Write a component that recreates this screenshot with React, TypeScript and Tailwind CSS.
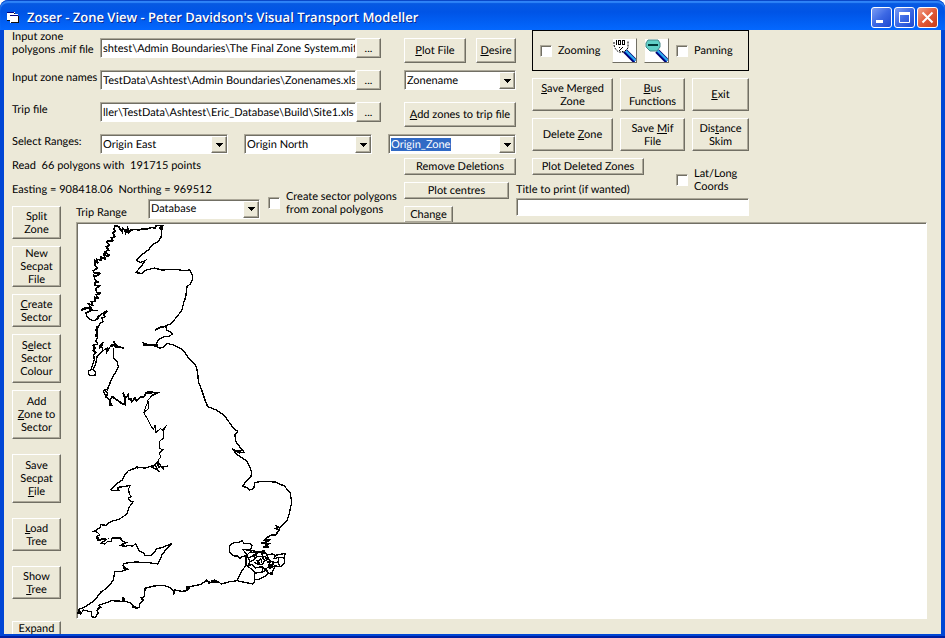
import React from "react";

const face = "border border-t-white border-l-white border-r-[#716f64] border-b-[#716f64] bg-[#ece9d8] shadow-[inset_-1px_-1px_0_#aca899]";
const sunken = "border border-t-[#aca899] border-l-[#aca899] border-r-white border-b-white bg-white shadow-[inset_1px_1px_0_#716f64]";

interface ButtonProps {
  text: string;
  className?: string;
}

// "&" marks the access key, "|" a line break
const Button = ({ text, className = "" }: ButtonProps) => (
  <button className={`${face} shrink-0 text-center ${className}`}>
    {text.split("|").map((line) => {
      const [before, rest] = line.includes("&") ? line.split("&") : [line, ""];
      return (
        <span key={line} className="block whitespace-nowrap">
          {before}
          {rest && <u className="underline-offset-1">{rest[0]}</u>}
          {rest.slice(1)}
        </span>
      );
    })}
  </button>
);

interface ComboProps {
  id: string;
  value: string;
  className?: string;
  selected?: boolean;
}

const Combo = ({ id, value, className = "", selected }: ComboProps) => (
  <div className={`${sunken} relative flex h-5 shrink-0 items-center pl-0.5 ${className}`}>
    <select
      id={id}
      aria-label={value}
      className={selected ? "appearance-none bg-[#316ac5] text-white outline-none" : "w-full appearance-none outline-none"}
    >
      <option>{value}</option>
    </select>
    <span className={`${face} pointer-events-none absolute top-px right-0 bottom-0 flex w-4 items-center justify-center`}>
      <svg width="7" height="4" shapeRendering="crispEdges">
        <path d="M0 0h7v1H0zM1 1h5v1H1zM2 2h3v1H2zM3 3h1v1H3z" />
      </svg>
    </span>
  </div>
);

const Check = ({ text, className = "" }: ButtonProps) => (
  <label className={`flex items-center gap-1.5 whitespace-pre ${className}`}>
    <input type="checkbox" className={`${sunken} size-3 shrink-0 appearance-none`} />
    {text}
  </label>
);

const files = [
  { id: "mif", label: "Input zone\npolygons .mif file", value: "shtest\\Admin Boundaries\\The Final Zone System.mif", shift: "-mt-2" },
  { id: "names", label: "Input zone names", value: "TestData\\Ashtest\\Admin Boundaries\\Zonenames.xls", shift: "mt-px" },
  { id: "trip", label: "Trip file", value: "ller\\TestData\\Ashtest\\Eric_Database\\Build\\Site1.xls", shift: "mt-px" },
];

const tools = [
  { text: "Split|Zone", size: "h-[33px] mb-[7px]" },
  { text: "New|Secpat|File", size: "h-[41px] mb-[7px]" },
  { text: "&Create|Sector", size: "h-[33px] mb-[7px]" },
  { text: "S&elect|Sector|Colour", size: "h-[49px] mb-[7px]" },
  { text: "Add|&Zone to|Sector", size: "h-[49px] mb-[15px]" },
  { text: "Save|Secpat|&File", size: "h-[49px] mb-[15px]" },
  { text: "&Load|Tree", size: "h-[33px] mb-[15px]" },
  { text: "Show|&Tree", size: "h-[33px] mb-[22px]" },
  { text: "Expand", size: "h-[33px] pb-5" },
];

const WindowButton = ({ name, red, children }: { name: string; red?: boolean; children: React.ReactNode }) => (
  <button
    aria-label={name}
    className={`flex size-[21px] items-center justify-center rounded-[3px] border border-white bg-linear-to-br ${
      red ? "from-[#f0a088] via-[#e25a38] to-[#c83c14]" : "from-[#7c9cf4] via-[#3c68e4] to-[#1c48d0]"
    }`}
  >
    <svg width="19" height="19" viewBox="0 0 19 19" fill="none" stroke="white">{children}</svg>
  </button>
);

const TitleBar = () => (
  <header className="flex h-[30px] shrink-0 items-center rounded-t-lg bg-linear-to-b from-[#0a5be0] from-0% via-[#0054e6] via-40% to-[#0468ff] px-[7px] pt-1 shadow-[inset_0_1px_0_#0a48c8,inset_0_3px_1px_#2f84f8]">
    <svg width="12" height="12" viewBox="0 0 12 12" shapeRendering="crispEdges">
      <path d="M0 1h8v2h3v9H3V9H0z" fill="#fff" />
      <path d="M0 1h7v1H0zM3 4h8v1H3z" fill="#000080" />
      <path d="M0 9h3v1H0zM4 11h8v1H4zM11 5h1v7h-1zM7 2h1v1H7z" fill="#111" />
    </svg>
    <h1 className="flex-1 pl-2 font-['Open_Sans',sans-serif] text-[13px] font-semibold text-white [text-shadow:1px_1px_0_#0a2a90]">
      Zoser - Zone View - Peter Davidson's Visual Transport Modeller
    </h1>
    <div className="flex gap-0.5">
      <WindowButton name="Minimize"><path d="M4 13.500h7" strokeWidth="3" /></WindowButton>
      <WindowButton name="Maximize"><path d="M4.500 4.500h10v10h-10z" /><path d="M4 5.500h11" strokeWidth="3" /></WindowButton>
      <WindowButton name="Close" red><path d="M4.500 4.500l10 10M14.500 4.500l-10 10" strokeWidth="2" /></WindowButton>
    </div>
  </header>
);

const Lens = ({ full }: { full?: boolean }) => (
  <button aria-label={full ? "Zoom to 100%" : "Zoom out"} className="size-[25px] border border-t-[#ece9d8] border-l-[#ece9d8] border-r-[#716f64] border-b-[#716f64] bg-white">
    <svg width="23" height="23" viewBox="0 0 23 23">
      <path d="M12 12l10 10" stroke="#000070" strokeWidth="5" />
      <path d="M12.500 11.500l10 10" stroke="#30b0f0" strokeWidth="2" />
      <path d="M12 13l10 10" stroke="#0030c0" />
      {full ? (
        <>
          <path d="M1 3v3q1 5 5 7h5l4-4V2" fill="none" stroke="#000" strokeDasharray="2 1" />
          <path d="M3.500 1v5M5.500 1.500h2v4h-2zM9.500 1.500h2v4h-2zM6 8h1M10 8l-4 4M9 12h1" fill="none" stroke="#000" shapeRendering="crispEdges" />
        </>
      ) : (
        <>
          <path d="M3 1h10l2 3v4l-3 4H5L1 8V4z" fill="#60d0c8" stroke="#488" />
          <path d="M3 6h10" stroke="#003838" strokeWidth="2" shapeRendering="crispEdges" />
        </>
      )}
    </svg>
  </button>
);

// one unit is a third of a pixel
const Coast = () => (
  <svg width="220" height="395" viewBox="6 9 660 1185" fill="none" stroke="#000" strokeWidth="4" shapeRendering="crispEdges">
    {/* highlands, west side */}
    <path
      transform="translate(3 6)"
      strokeWidth="5"
      d="M118 10L114 22 118 28 110 32 116 44 106 48 112 56 92 58 100 70 90 74 98 84 86 90 100 100 96 104 84 96 88 112 74 104 76 114 62 112 66 124 56 114 56 130 64 138 52 146 54 152 72 154 62 162 54 160 56 172 68 182 58 180 56 190 72 190 60 200 62 212 76 214 60 218 66 228 56 226 58 238 46 240 50 250 38 246 46 260 28 258 18 262 18 268"
    />
    <path strokeWidth="5" d="M121 16L132 20 136 28 142 36 142 24 150 30 152 38 158 24 160 38 168 30 180 28 192 30 204 26 214 28 230 22 240 24 244 16 262 17 254 24 262 30" />
    <path d="M262 17L258 52 248 66 232 74 222 88 196 108 184 122 196 128 210 122 200 138 182 158 200 160 214 150 238 144 260 150 300 148 330 152 344 150 352 164 352 180 346 192 336 200 332 232 326 248 320 272 304 292 290 310 276 316 272 318 276 332 284 334 292 342 282 350 266 350 250 360 244 372 234 376 254 384 266 382 276 370 292 374 314 384 328 394 340 414 362 436 368 456 370 484 380 510 390 540" />
    <path strokeWidth="5" d="M240 330L256 322 276 318M202 366L210 372 234 376 250 374M204 374L234 376" />
    <path d="M20 270L42 264 46 274 32 278 36 290 48 300 60 302 72 294 68 290 96 272 86 284 90 290 80 294 84 304 74 312 70 320 62 330 66 340 68 352 62 362 68 372 54 376 62 384 54 392 62 398 56 404 58 420 52 436 48 448 40 454 40 464 48 466 60 466 62 456 54 450 62 432 66 410 74 400 84 392 80 378 84 366 74 386 76 372M42 270L68 272M60 302L74 286M84 392L96 384 96 396 108 376 112 382 110 374 120 372 116 364 126 378 146 384 122 382 114 372" />
    <path strokeWidth="6" d="M96 272L86 284M66 318L64 352M56 376L60 402M118 368L122 382 132 380" />
    <path d="M116 384L116 414 126 424 130 440 122 456 112 474 100 500 98 510 88 508 86 516 94 532 100 538" />
    <path strokeWidth="5" d="M90 510L98 520 94 532 102 538 106 546 104 556 110 556 104 542 112 530 126 540 140 550 150 554 150 538 144 518 152 534 160 524 160 538 168 536 170 546 180 534 184 542 196 532 208 530 214 518 226 520 222 516 248 518 228 528" />
    <path strokeWidth="3" d="M228 530L218 542 222 552 220 566 206 578 214 590 220 602" />

    <g transform="translate(0 540)">
      <path strokeWidth="3" d="M220 6L214 16 206 38 218 58 230 82 236 88 240 76 242 98 256 86 262 90 274 76 266 90 266 114 252 126 252 146 266 148 254 158 256 172 248 184" />
      <path d="M248 184L240 194 250 212 232 202 250 186 256 196 266 208 264 200 280 198M240 196L230 198 210 204 188 202 160 212 148 226 142 240 124 252 108 268 112 272 132 270 128 262 144 260 166 256 160 268 164 284 170 290 160 294 166 304 174 306 162 322 156 342 132 358 108 364 92 376 78 374 74 384 56 394 66 396 74 404 64 410 68 420 94 418 78 430 90 432 98 424 108 424 112 414 136 414 144 424 154 428 138 436 150 440 158 436 172 438 182 432 192 452 206 460 210 466 230 466 246 446 264 442 290 430 262 462 256 476 248 492 222 488 180 486 148 490 144 498 158 508 140 514 120 514 114 542 98 562 76 578 58 602 28 622 12 628 8 640 16 642 26 630 50 636 50 650 60 652 70 640 66 630 78 622 72 616 100 606 108 602 144 604 146 590 148 604 166 608 178 620 184 626 192 622 196 608 206 600 198 594 208 590 208 576 214 564 236 558 264 556 284 562 296 572 296 584 300 570 320 574 336 572 344 562 332 562 376 554 396 540 402 550 412 546 418 540 430 546 440 552 460 546 486 542" />
      <path strokeWidth="6" d="M184 200L190 206M248 186L252 204M66 408L70 420 92 416M128 412L138 416M140 432L148 440M144 504L154 508M76 576L82 574M66 626L76 624M144 592L146 606M172 620L190 624M200 594L206 604M208 568L214 564M296 570L296 580M334 560L338 574M392 540L404 548M408 544L432 546M10 632L18 640" />
      <path d="M390 0L398 20 424 30 448 46 462 66 476 86 488 94 480 104 482 124 494 140 508 158 494 156 474 148 482 160 498 172 514 182 524 200 530 216 528 230 512 246 502 260 516 262 522 270 536 266 540 248 560 244 600 246 628 258 646 280 650 308 642 344 636 362 620 378 612 386" />
      <path strokeWidth="3" d="M486 150L506 152M474 150L496 160" />
    </g>

    {/* Thames estuary and the Kent zones */}
    <g transform="translate(441 936)">
      <path strokeWidth="5" d="M160 -20L170 -14 162 -10 172 -6 166 2 160 10 150 8 136 16 128 24 146 22 132 30 118 34 140 36 124 46 142 44" />
      <path d="M24 38L38 32 48 32 60 26 66 34 84 34 90 40 88 50 80 54 62 52 72 64 76 70 60 74 54 80 46 72 36 72 22 60 24 38M62 52L90 56 84 62 96 60M72 72L72 100 56 122 45 146 92 156 98 148 98 124 120 120 134 114 138 124 130 132 112 142 98 142" />
      <path d="M90 56L110 60 126 56 134 68 150 66 160 70 190 64 186 78 188 92 176 104 160 102 152 116 152 128 142 124 130 114M76 70L84 90 78 100 90 98 100 108 120 104 130 112 140 104 150 96M84 90L98 82 96 70 80 78M96 82L104 74 120 74 128 86 122 98 108 98 98 90M108 90L116 80 120 92M128 86L140 82 136 70 124 76 118 64M140 82L150 90 168 92 170 76 186 78M168 92L174 102M72 100L90 112 100 124M120 104L122 120M160 70L156 80 170 76M150 90L158 102M104 74L100 62" />
      <path strokeWidth="7" d="M98 64L112 60 128 62M94 70L104 68M138 98L150 104 142 108 152 96M130 76L140 80M148 120L152 128M136 90L146 92M106 84L112 98" />
    </g>
  </svg>
);

const App = () => (
  <div className="h-screen bg-white">
    <div className="flex h-full flex-col overflow-hidden rounded-t-lg bg-[#0046d5] font-[Lato,Arial,sans-serif] text-[11px] leading-[13px] text-black shadow-[inset_0_-2px_0_#001ea0] [text-rendering:geometricPrecision]">
      <TitleBar />
      <main className="mr-1 mb-1 ml-1 flex min-h-0 flex-1 flex-col overflow-hidden bg-[#ece9d8] pl-2 [&_button]:[text-rendering:inherit] [&_input]:[text-rendering:inherit] [&_select]:[text-rendering:inherit]">
        <section className="flex h-48 shrink-0">
          <div className="w-[504px] shrink-0 pt-2">
            <div className="flex">
              <div>
                {files.map(({ id, label, value, shift }) => (
                  <div key={id} className="flex h-8 items-start">
                    <label htmlFor={id} className={`w-22 whitespace-pre ${shift}`}>{label}</label>
                    <input id={id} defaultValue={value} className={`${sunken} h-5 w-64 pl-0.5 outline-none`} />
                    <Button text="..." className="h-5 w-[25px]" />
                  </div>
                ))}
              </div>
              <div className="ml-auto w-28">
                <div className="flex h-8 justify-between">
                  <Button text="&Plot File" className="h-[25px] w-[62px]" />
                  <Button text="&Desire" className="h-[25px] w-10" />
                </div>
                <div className="h-8"><Combo id="zonename" value="Zonename" /></div>
                <Button text="&Add zones to trip file" className="h-[25px] w-full" />
              </div>
            </div>
            <div className="flex h-6 items-start">
              <label htmlFor="east" className="mt-px w-22">Select Ranges:</label>
              <div className="flex flex-1 justify-between">
                <Combo id="east" value="Origin East" className="w-32" />
                <Combo id="north" value="Origin North" className="w-32" />
                <Combo id="zone" value="Origin_Zone" className="w-32" selected />
              </div>
            </div>
            <div className="flex">
              <div className="w-[392px]">
                <p className="h-6 pt-px whitespace-pre">Read  66 polygons with  191715 points</p>
                <div className="flex">
                  <div className="w-64">
                    <p className="h-4 pt-px whitespace-pre">Easting = 908418.06  Northing = 969512</p>
                    <div className="flex items-center pl-16">
                      <label htmlFor="range" className="w-18 pt-2">Trip Range</label>
                      <Combo id="range" value="Database" className="w-28" />
                    </div>
                  </div>
                  <Check text={"Create sector polygons\nfrom zonal polygons"} className="pt-1" />
                </div>
              </div>
              <div className="flex flex-col items-start gap-[7px]">
                <Button text="Remove Deletions" className="h-[17px] w-28" />
                <Button text="Plot centres" className="h-[17px] w-[105px]" />
                <Button text="Change" className="h-[17px] w-[49px]" />
              </div>
            </div>
          </div>

          <div className="w-[233px] shrink-0">
            <div className="pl-4">
              <div className="flex h-[41px] items-center gap-[7px] border border-black px-[7px]">
                <Check text="Zooming" className="w-[65px]" />
                <Lens full />
                <Lens />
                <Check text="Panning" />
              </div>
              <div className="mt-[7px] grid h-20 grid-cols-[81px_65px_57px] grid-rows-[33px_33px] gap-[7px]">
                <Button text="&Save Merged|Zone" />
                <Button text="&Bus|Functions" />
                <Button text="&Exit" />
                <Button text="Delete &Zone" />
                <Button text="Save &Mif|File" />
                <Button text="Dis&tance|Skim" />
              </div>
            </div>
            <div className="flex h-10">
              <div className="w-40">
                <div className="h-6 pl-4"><Button text="Plot Deleted Zones" className="h-[17px] w-28" /></div>
                <label htmlFor="title" className="block pt-px">Title to print (if wanted)</label>
              </div>
              <Check text={"Lat/Long\nCoords"} className="pt-1" />
            </div>
            <input id="title" className={`${sunken} h-[18px] w-full px-1 outline-none`} />
          </div>
        </section>

        <section className="flex min-h-0 flex-1">
          <aside className="-mt-4 flex w-[49px] flex-col">
            {tools.map(({ text, size }) => (
              <Button key={text} text={text} className={size} />
            ))}
          </aside>
          <div className={`${sunken} mr-3.5 mb-[15px] ml-[15px] flex-1`}>
            <Coast />
          </div>
        </section>
      </main>
    </div>
  </div>
);

export default App;
